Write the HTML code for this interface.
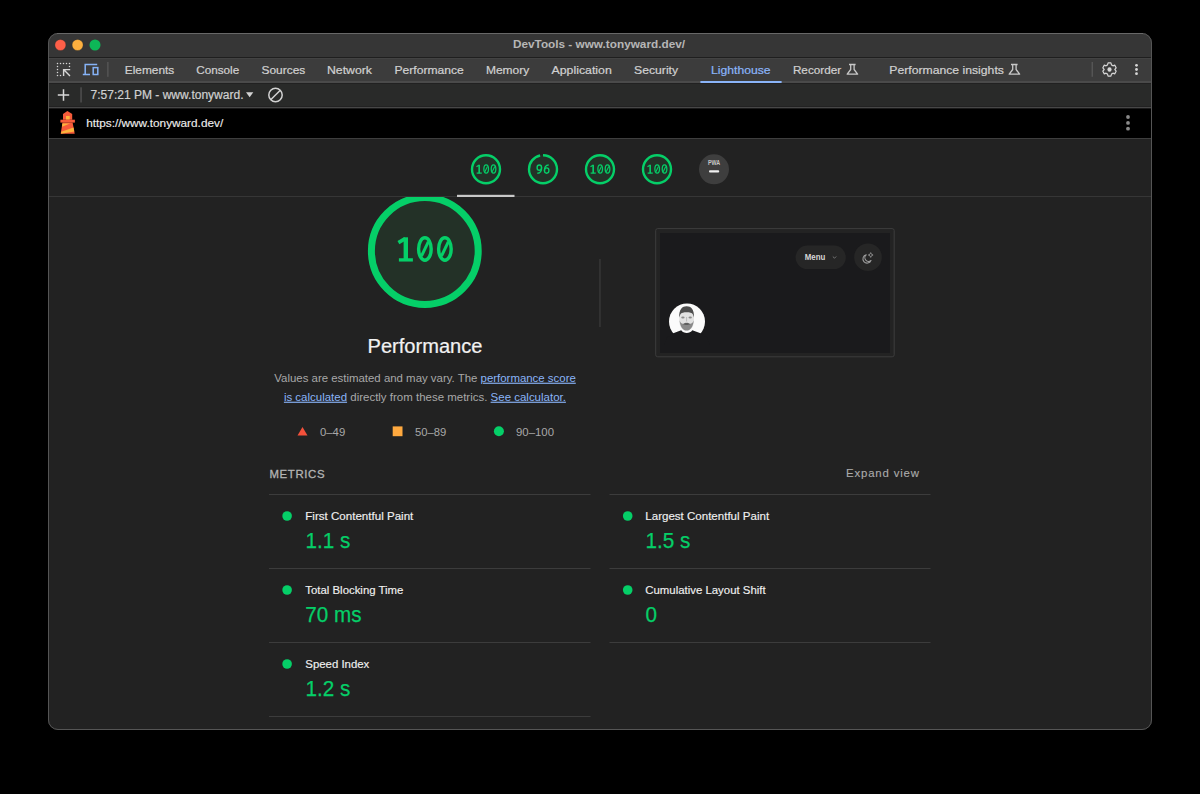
<!DOCTYPE html>
<html>
<head>
<meta charset="utf-8">
<style>
html,body{margin:0;padding:0;background:#000;width:1200px;height:794px;overflow:hidden}
svg{display:block}
text{font-family:"Liberation Sans",sans-serif}
.mono{font-family:"Liberation Mono",monospace}
</style>
</head>
<body>
<svg width="1200" height="794" viewBox="0 0 1200 794">
<defs>
<clipPath id="win"><rect x="48" y="33" width="1104" height="697" rx="10" ry="10"/></clipPath>
<clipPath id="content"><rect x="48" y="197" width="1104" height="533"/></clipPath>
<clipPath id="avatar"><circle cx="687" cy="321.5" r="18"/></clipPath>
<!-- digit glyphs (big coordinates) -->
<g id="g100" fill="none" stroke="#05cf68">
  <path d="M405.8 237.3 V260" stroke-width="4.4"/>
  <path d="M405.2 238.6 L398.4 242.6" stroke-width="3.6"/>
  <path d="M398.9 259.9 H412.9" stroke-width="3.3"/>
  <ellipse cx="424.9" cy="249" rx="6.3" ry="11.2" stroke-width="3.4"/>
  <path d="M428.4 241.6 L421.4 256.2" stroke-width="3"/>
  <ellipse cx="444.9" cy="249" rx="6.3" ry="11.2" stroke-width="3.4"/>
  <path d="M448.4 241.6 L441.4 256.2" stroke-width="3"/>
</g>
</defs>
<g clip-path="url(#win)">
  <rect x="48" y="33" width="1104" height="697" fill="#222222"/>
  <!-- title bar -->
  <rect x="48" y="33" width="1104" height="24" fill="#363636"/>
  <rect x="48" y="57" width="1104" height="1" fill="#1f1f1f"/>
  <rect x="48" y="58" width="1104" height="1" fill="#434343"/>
  <!-- tab bar -->
  <rect x="48" y="59" width="1104" height="22" fill="#3c3c3c"/>
  <rect x="48" y="81" width="1104" height="2" fill="#4a4a4a"/>
  <rect x="48" y="83" width="1104" height="1" fill="#212121"/>
  <!-- toolbar -->
  <rect x="48" y="84" width="1104" height="22" fill="#292a29"/>
  <rect x="48" y="106" width="1104" height="1" fill="#222"/>
  <rect x="48" y="107" width="1104" height="1.5" fill="#474747"/>
  <!-- url bar -->
  <rect x="48" y="108.5" width="1104" height="29.5" fill="#000"/>
  <rect x="48" y="138" width="1104" height="1" fill="#3e3e3e"/>
  <!-- report header -->
  <rect x="48" y="139" width="1104" height="591" fill="#222222"/>
  <rect x="48" y="196" width="1104" height="1" fill="#363636"/>
</g>
<!-- window border -->
<rect x="48.5" y="33.5" width="1103" height="696" rx="9.5" ry="9.5" fill="none" stroke="#555555" stroke-width="1"/>

<rect x="57" y="33" width="1086" height="1" fill="#686868"/>
<!-- traffic lights -->
<circle cx="60.4" cy="45" r="5.5" fill="#fe5f48" stroke="#2a2a2a" stroke-width="0.3"/>
<circle cx="77.6" cy="45" r="5.5" fill="#fdb03f" stroke="#2a2a2a" stroke-width="0.3"/>
<circle cx="95" cy="45" r="5.5" fill="#0db757"/>
<text x="513" y="48.2" font-size="11.7" font-weight="bold" fill="#b6b6b6" textLength="172" lengthAdjust="spacingAndGlyphs">DevTools - www.tonyward.dev/</text>

<!-- tab labels -->
<g font-size="11.8" fill="#d0d0d0" stroke="#d0d0d0" stroke-width="0.22">
<text x="124.8" y="73.5" textLength="49.5" lengthAdjust="spacingAndGlyphs">Elements</text>
<text x="196.2" y="73.5" textLength="43" lengthAdjust="spacingAndGlyphs">Console</text>
<text x="261.5" y="73.5" textLength="43.8" lengthAdjust="spacingAndGlyphs">Sources</text>
<text x="327" y="73.5" textLength="45" lengthAdjust="spacingAndGlyphs">Network</text>
<text x="394.5" y="73.5" textLength="69.3" lengthAdjust="spacingAndGlyphs">Performance</text>
<text x="485.9" y="73.5" textLength="43.3" lengthAdjust="spacingAndGlyphs">Memory</text>
<text x="551.5" y="73.5" textLength="60.3" lengthAdjust="spacingAndGlyphs">Application</text>
<text x="634.1" y="73.5" textLength="44" lengthAdjust="spacingAndGlyphs">Security</text>
<text x="711.1" y="73.5" textLength="59.5" fill="#8ab4f8" stroke="#8ab4f8" lengthAdjust="spacingAndGlyphs">Lighthouse</text>
<text x="792.9" y="73.5" textLength="48.3" lengthAdjust="spacingAndGlyphs">Recorder</text>
<text x="889.3" y="73.5" textLength="114.6" lengthAdjust="spacingAndGlyphs">Performance insights</text>
</g>
<rect x="700.4" y="81" width="81.2" height="2" fill="#8ab4f8"/>


<!-- tab bar icons -->
<g fill="#d6d6d6">
<circle cx="57.5" cy="63.5" r="0.75"/><circle cx="60.5" cy="63.5" r="0.75"/><circle cx="63.5" cy="63.5" r="0.75"/><circle cx="66.5" cy="63.5" r="0.75"/><circle cx="69.5" cy="63.5" r="0.75"/>
<circle cx="69.5" cy="66.5" r="0.75"/>
<circle cx="57.5" cy="66.5" r="0.75"/><circle cx="57.5" cy="69.5" r="0.75"/><circle cx="57.5" cy="72.5" r="0.75"/><circle cx="57.5" cy="75.5" r="0.75"/>
<circle cx="60.5" cy="75.5" r="0.75"/>
</g>
<path d="M63.6 76 V69.6 H70.2 M63.6 69.6 L70 76" stroke="#d6d6d6" stroke-width="1.4" fill="none"/>
<path d="M85.2 74.5 V64.6 H97.2 M82.8 74.5 H90" stroke="#86b3f7" stroke-width="1.5" fill="none"/>
<rect x="93.2" y="67.6" width="4.6" height="6.9" stroke="#86b3f7" stroke-width="1.5" fill="none"/>
<rect x="107.2" y="62" width="1.3" height="14.8" fill="#585858"/>
<path d="M849 64.5 H855.6 M850.7 64.5 V69.5 L847.2 74.2 H857.6 L854.1 69.5 V64.5" stroke="#c8c8c8" stroke-width="1.3" fill="none" stroke-linejoin="round"/>
<path d="M1011 64.5 H1017.6 M1012.7 64.5 V69.5 L1009.2 74.2 H1019.6 L1016.1 69.5 V64.5" stroke="#c8c8c8" stroke-width="1.3" fill="none" stroke-linejoin="round"/>
<rect x="1091.6" y="62" width="1.3" height="14.8" fill="#585858"/>
<g transform="translate(1109.5 69.5) scale(0.9 1)">
<path id="gear" d="M-1.6,-6.6 L1.6,-6.6 L2.2,-4.6 L3.8,-3.7 L5.8,-4.3 L7.4,-1.6 L5.9,0 L7.4,1.6 L5.8,4.3 L3.8,3.7 L2.2,4.6 L1.6,6.6 L-1.6,6.6 L-2.2,4.6 L-3.8,3.7 L-5.8,4.3 L-7.4,1.6 L-5.9,0 L-7.4,-1.6 L-5.8,-4.3 L-3.8,-3.7 L-2.2,-4.6 Z" fill="none" stroke="#d6d6d6" stroke-width="1.3" stroke-linejoin="round"/>
<circle cx="0" cy="0" r="2.3" fill="#d6d6d6"/>
</g>
<g fill="#d6d6d6"><circle cx="1136.5" cy="65.3" r="1.4"/><circle cx="1136.5" cy="69.5" r="1.4"/><circle cx="1136.5" cy="73.7" r="1.4"/></g>

<!-- toolbar -->
<path d="M63.5 89.3 V100.7 M57.8 95 H69.2" stroke="#d8d8d8" stroke-width="1.5"/>
<rect x="80.4" y="87.3" width="1.3" height="15.2" fill="#555"/>
<text x="90.5" y="99.2" font-size="12" fill="#d0d0d0" stroke="#d0d0d0" stroke-width="0.2" textLength="153" lengthAdjust="spacingAndGlyphs">7:57:21 PM - www.tonyward.</text>
<path d="M246 92.3 H253.3 L249.65 97.2 Z" fill="#d2d2d2"/>
<circle cx="275.5" cy="95" r="6.7" fill="none" stroke="#d2d2d2" stroke-width="1.5"/>
<path d="M280.3 90.2 L270.7 99.8" stroke="#d2d2d2" stroke-width="1.5"/>

<!-- url bar -->
<g>
<path d="M67.4 111.1 L72.2 114 V119.7 H63 V114 Z" fill="#f65b3a"/>
<rect x="66" y="116" width="3.7" height="3.6" fill="#fbb43c"/>
<rect x="60.4" y="119.7" width="14.5" height="2.9" fill="#f65b3a"/>
<path d="M62.5 122.6 H72.6 L74.7 133.8 H60.7 Z" fill="#f65b3a"/>
<path d="M62.3 123.6 H70 L62 126.8 Z" fill="#fbb43c"/>
<path d="M73.5 127.6 L74.3 131.6 L61 133.8 L61.3 131.8 Z" fill="#fbb43c"/>
</g>
<text x="86.2" y="127.2" font-size="11.8" fill="#ececec" stroke="#ececec" stroke-width="0.15" textLength="137" lengthAdjust="spacingAndGlyphs">https://www.tonyward.dev/</text>
<g fill="#8a8a8a"><circle cx="1128" cy="117" r="1.9"/><circle cx="1128" cy="122.9" r="1.9"/><circle cx="1128" cy="128.7" r="1.9"/></g>

<!-- report header gauges -->
<circle cx="486" cy="169.2" r="14.5" fill="#233127"/>
<circle cx="486" cy="169.2" r="14.0" fill="none" stroke="#05cf68" stroke-width="2.4"/>
<circle cx="543" cy="169.2" r="14.5" fill="#233127"/>
<circle cx="543" cy="169.2" r="14.0" fill="none" stroke="#05cf68" stroke-width="2.4" stroke-dasharray="84.44 87.96" transform="rotate(-90 543 169.2)" stroke-linecap="butt"/>
<circle cx="600" cy="169.2" r="14.5" fill="#233127"/>
<circle cx="600" cy="169.2" r="14.0" fill="none" stroke="#05cf68" stroke-width="2.4"/>
<circle cx="657" cy="169.2" r="14.5" fill="#233127"/>
<circle cx="657" cy="169.2" r="14.0" fill="none" stroke="#05cf68" stroke-width="2.4"/>
<use href="#g100" transform="translate(486.3 169.1) scale(0.367) translate(-425.2 -249)"/>
<use href="#g100" transform="translate(600.3 169.1) scale(0.367) translate(-425.2 -249)"/>
<use href="#g100" transform="translate(657.3 169.1) scale(0.367) translate(-425.2 -249)"/>
<g transform="translate(543 169.1) scale(0.367) translate(-425 -249)" fill="none" stroke="#05cf68" stroke-width="3.7">
  <ellipse cx="415" cy="245" rx="6.1" ry="7.2"/>
  <path d="M421.1 244 C421.3 254 418 260.2 409.5 260.2"/>
  <ellipse cx="435" cy="253" rx="6.1" ry="7.2"/>
  <path d="M428.9 254 C428.7 244 432 237.8 440.5 237.8"/>
</g>
<circle cx="714" cy="169.3" r="15" fill="#3e3e3e"/>
<text x="707.9" y="164.9" font-size="6.5" font-weight="bold" fill="#c8c8c8" textLength="12.2" lengthAdjust="spacingAndGlyphs">PWA</text>
<rect x="709" y="170.2" width="10.2" height="2.4" rx="1" fill="#f0f0f0"/>
<rect x="457" y="194.8" width="57.5" height="2.2" fill="#c8c8c8"/>


<!-- big gauge -->
<g clip-path="url(#content)">
<circle cx="424.8" cy="251" r="56.9" fill="#233127"/>
<circle cx="424.8" cy="251" r="53.4" fill="none" stroke="#05cf68" stroke-width="7"/>
</g>
<use href="#g100"/>
<rect x="599.3" y="259" width="1.3" height="68" fill="#3a3a3a"/>
<text x="367.5" y="352.6" font-size="20" fill="#f2f2f2" stroke="#f2f2f2" stroke-width="0.2" textLength="115" lengthAdjust="spacingAndGlyphs">Performance</text>
<g font-size="11.4" fill="#a8a8a8">
<text x="274.3" y="381.7" textLength="301.5" lengthAdjust="spacingAndGlyphs">Values are estimated and may vary. The <tspan fill="#8ab4f8" text-decoration="underline">performance score</tspan></text>
<text x="283.9" y="400.7" textLength="282" lengthAdjust="spacingAndGlyphs"><tspan fill="#8ab4f8" text-decoration="underline">is calculated</tspan> directly from these metrics. <tspan fill="#8ab4f8" text-decoration="underline">See calculator.</tspan></text>
</g>
<path d="M302.5 426.9 L307.5 435.5 H297.5 Z" fill="#f4513b"/>
<rect x="392.7" y="426.4" width="9.8" height="9.8" fill="#ffa93f"/>
<circle cx="498.9" cy="431.2" r="5" fill="#05cf68"/>
<g font-size="11" fill="#a8a8a8">
<text x="320" y="435.5" textLength="25.2" lengthAdjust="spacingAndGlyphs">0–49</text>
<text x="415" y="435.5" textLength="31.3" lengthAdjust="spacingAndGlyphs">50–89</text>
<text x="516" y="435.5" textLength="38" lengthAdjust="spacingAndGlyphs">90–100</text>
</g>

<!-- metrics -->
<text x="269.5" y="477.5" font-size="11.4" fill="#b4b4b4" stroke="#b4b4b4" stroke-width="0.3" textLength="55" lengthAdjust="spacing">METRICS</text>
<text x="846" y="477.2" font-size="11.4" fill="#ababab" stroke="#ababab" stroke-width="0.12" textLength="73" lengthAdjust="spacing">Expand view</text>
<g fill="#3c3c3c">
<rect x="269" y="494" width="321.5" height="1"/><rect x="609.5" y="494" width="321" height="1"/>
<rect x="269" y="568" width="321.5" height="1"/><rect x="609.5" y="568" width="321" height="1"/>
<rect x="269" y="642" width="321.5" height="1"/><rect x="609.5" y="642" width="321" height="1"/>
<rect x="269" y="716" width="321.5" height="1"/>
</g>
<g fill="#05cf68">
<circle cx="287.1" cy="516" r="4.8"/><circle cx="627.7" cy="516" r="4.8"/>
<circle cx="287.1" cy="590" r="4.8"/><circle cx="627.7" cy="590" r="4.8"/>
<circle cx="287.1" cy="664" r="4.8"/>
</g>
<g font-size="11.4" fill="#f0f0f0" stroke="#f0f0f0" stroke-width="0.15">
<text x="305.3" y="520" textLength="108" lengthAdjust="spacingAndGlyphs">First Contentful Paint</text>
<text x="645.3" y="520" textLength="123.8" lengthAdjust="spacingAndGlyphs">Largest Contentful Paint</text>
<text x="305.3" y="594">Total Blocking Time</text>
<text x="645.3" y="594">Cumulative Layout Shift</text>
<text x="305.3" y="668">Speed Index</text>
</g>
<g font-size="21.8" fill="#05cf68" stroke="#05cf68" stroke-width="0.25" lengthAdjust="spacingAndGlyphs">
<text x="305.5" y="547.8" textLength="44.85" lengthAdjust="spacingAndGlyphs">1.1 s</text>
<text x="645.5" y="547.8" textLength="44.85" lengthAdjust="spacingAndGlyphs">1.5 s</text>
<text x="305.3" y="621.8" textLength="56.3" lengthAdjust="spacingAndGlyphs">70 ms</text>
<text x="645.5" y="621.8" textLength="11.5" lengthAdjust="spacingAndGlyphs">0</text>
<text x="305.5" y="695.8" textLength="44.85" lengthAdjust="spacingAndGlyphs">1.2 s</text>
</g>

<!-- screenshot thumbnail -->
<rect x="655.7" y="228.6" width="238.5" height="128.2" rx="2" fill="#232323" stroke="#3d3d3d" stroke-width="1"/>
<rect x="660" y="233" width="230" height="120" fill="#1a1a1c"/>
<rect x="795.6" y="245.5" width="50.2" height="23.6" rx="11.8" fill="#262626"/>
<text x="804.7" y="260.3" font-size="8.2" font-weight="bold" fill="#d6d6d6" textLength="20.6" lengthAdjust="spacingAndGlyphs">Menu</text>
<path d="M832.8 256.5 L834.5 258.2 L836.2 256.5" stroke="#888" stroke-width="0.8" fill="none"/>
<circle cx="868" cy="257.3" r="13.8" fill="#262626"/>
<path d="M866.2 254.8 A4.2 4.2 0 1 0 871 260.5 A3.6 3.6 0 0 1 866.2 254.8 Z" fill="none" stroke="#9c9c9c" stroke-width="1.1" stroke-linejoin="round"/>
<path d="M870.7 252.6 Q871 254.7 873.1 255 Q871 255.3 870.7 257.4 Q870.4 255.3 868.3 255 Q870.4 254.7 870.7 252.6 Z" fill="none" stroke="#9c9c9c" stroke-width="0.8" stroke-linejoin="round"/>
<g clip-path="url(#avatar)">
<rect x="668" y="303" width="38" height="38" fill="#fbfbfb"/>
<path d="M679.4 318 C679.4 309 682.5 306.3 686.6 306.3 C690.8 306.3 694 309 693.9 318 L694 321 C693.8 327 690.8 330.6 686.6 330.6 C682.4 330.6 679.5 327 679.3 321 Z" fill="#e2e2e2"/>
<path d="M679.3 317.5 C678.8 309 682.5 306.2 686.6 306.2 C690.8 306.2 694.4 309 693.9 317.5 L692.8 314.2 C691.5 311.6 682 311.6 680.4 314.2 Z" fill="#4e4e4e"/>
<path d="M679.6 320.5 C680.2 327 683 330.6 686.6 330.6 C690.3 330.6 693.2 327 693.7 320.5 C692.5 323.6 690.5 324.5 688.8 323.2 C687.6 322.6 685.6 322.6 684.4 323.2 C682.7 324.5 680.8 323.6 679.6 320.5 Z" fill="#8a8a8a"/>
<path d="M683.2 324.2 C684.5 322.9 688.7 322.9 690 324.2 C688.7 324.8 684.5 324.8 683.2 324.2 Z" fill="#505050"/>
<ellipse cx="682.9" cy="317.6" rx="1.7" ry="1" fill="#8c8c8c"/>
<ellipse cx="690.2" cy="317.6" rx="1.7" ry="1" fill="#8c8c8c"/>
<path d="M686.6 317 V321.5" stroke="#b0b0b0" stroke-width="0.8"/>
</g>
<path d="M664 345 L667 337.5 L673.3 333.2 L681.2 330.2 C683.5 333.8 690 333.8 692.3 330.2 L700.5 333.2 L707 337.5 L710 345 Z" fill="#1a1a1c"/>

</svg>
</body>
</html>
